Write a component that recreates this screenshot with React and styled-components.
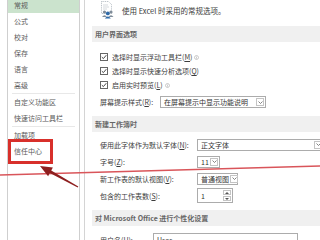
import React from "react";
import styled, { createGlobalStyle } from "styled-components";

const GlobalStyle = createGlobalStyle`
  html, body {
    margin: 0;
    padding: 0;
    background: #fff;
  }
  body {
    font-family: "Noto Sans CJK SC", "Noto Sans", sans-serif;
  }
`;

const Screen = styled.div`
  position: relative;
  width: 320px;
  height: 240px;
  overflow: hidden;
  display: flex;
  background: #fff;
  color: #3c3c3c;
  font-size: 7px;
`;

const Gutter = styled.div`
  width: 7px;
  flex: none;
`;

const Sidebar = styled.nav`
  width: 71px;
  flex: none;
  border-left: 1px solid #cfcfcf;
  border-right: 1px solid #cfcfcf;
`;

const NavList = styled.div`
  margin-top: -3px;
`;

const NavItem = styled.div`
  position: relative;
  height: 16px;
  line-height: 16px;
  padding-left: 6px;
  color: #5a5a5a;
  white-space: nowrap;
  background: ${(p) => (p.$active ? "#cbe3cd" : "transparent")};

  ${(p) =>
    p.$marked &&
    `
    &::after {
      content: "";
      position: absolute;
      left: 0;
      top: -4px;
      width: 45px;
      height: 25px;
      box-sizing: border-box;
      border: 3px solid #d8302b;
    }
  `}
`;

const NavDivider = styled.div`
  height: 1px;
  margin: 0 4px;
  background: #e8e8e8;
`;

const Main = styled.main`
  flex: 1;
  min-width: 0;
  margin-left: 4px;
  padding-left: 7px;
  border-left: 1px solid #d4d4d4;
`;

const Intro = styled.div`
  display: flex;
  align-items: center;
  gap: 7px;
  height: 20px;
  padding-left: 8px;
  font-size: 7.5px;
  white-space: nowrap;
`;

const SectionBar = styled.div`
  height: 16px;
  line-height: 16px;
  margin-top: ${(p) => p.$gap}px;
  padding-left: 3px;
  background: #f0f0f0;
  color: #666;
  font-weight: 700;
  white-space: nowrap;
`;

const SectionBody = styled.div`
  padding: ${(p) => p.$pad}px 0 0 8px;
`;

const CheckRow = styled.div`
  display: flex;
  align-items: center;
  height: 14px;
  white-space: nowrap;
`;

const CheckBox = styled.span`
  width: 8px;
  height: 8px;
  margin-right: 4px;
  box-sizing: border-box;
  border: 1px solid #666;
  display: flex;
  align-items: center;
  justify-content: center;
  flex: none;
`;

const Info = styled.svg`
  width: 5px;
  height: 5px;
  margin-left: 2px;
  flex: none;
`;

const FieldRow = styled.div`
  display: grid;
  grid-template-columns: ${(p) => p.$label}px auto;
  align-items: center;
  height: ${(p) => p.$height}px;
  margin-top: ${(p) => p.$gap || 0}px;
  white-space: nowrap;
`;

const Select = styled.div`
  display: flex;
  width: ${(p) => p.$width}px;
  height: ${(p) => p.$height || 12}px;
  box-sizing: border-box;
  border: 1px solid #acacac;
  background: #fff;
`;

const SelectText = styled.span`
  flex: 1;
  padding-left: 3px;
  display: flex;
  align-items: center;
  color: #333;
`;

const SelectArrow = styled.span`
  width: 8px;
  margin: 1px;
  box-sizing: border-box;
  border: 1px solid #c4c4c4;
  display: flex;
  align-items: center;
  justify-content: center;
  flex: none;
`;

const Spin = styled.span`
  width: 8px;
  margin: 1px;
  display: flex;
  flex-direction: column;
  gap: 1px;
  flex: none;
`;

const SpinHalf = styled.span`
  flex: 1;
  box-sizing: border-box;
  border: 1px solid #c4c4c4;
  display: flex;
  align-items: center;
  justify-content: center;
`;

const Overlay = styled.svg`
  position: absolute;
  left: 0;
  top: 0;
  width: 320px;
  height: 240px;
  pointer-events: none;
`;

const Key = ({ k }) => (
  <>
    (<u>{k}</u>)
  </>
);

const Chevron = () => (
  <svg width="5" height="3" viewBox="0 0 5 3">
    <path d="M0.5 0.5 L2.5 2.5 L4.5 0.5" fill="none" stroke="#666" strokeWidth="0.8" />
  </svg>
);

const Tick = () => (
  <svg width="6" height="6" viewBox="0 0 6 6">
    <path d="M0.8 3.1 L2.4 4.6 L5.3 1.2" fill="none" stroke="#333" strokeWidth="0.9" />
  </svg>
);

const InfoIcon = () => (
  <Info viewBox="0 0 5 5">
    <circle cx="2.5" cy="2.5" r="2" fill="none" stroke="#9a9a9a" strokeWidth="0.5" />
    <path d="M2.5 2.2 V3.6 M2.5 1.3 V1.7" stroke="#9a9a9a" strokeWidth="0.6" />
  </Info>
);

const GeneralIcon = () => (
  <svg width="15" height="18" viewBox="0 0 15 18">
    <path
      d="M1.5 0.5 H8.5 L11.5 3.5 V12.5 H1.5 Z"
      fill="#fff"
      stroke="#9aa3ad"
      strokeWidth="0.7"
      strokeDasharray="1 0.8"
    />
    <path d="M3 4 H8 M3 6 H9 M3 8 H7" stroke="#b8c0c8" strokeWidth="0.6" />
    <circle cx="4.5" cy="11" r="1.6" fill="#7f8c99" />
    <path d="M2 16 Q4.5 12.6 7 16 Z" fill="#7f8c99" />
    <circle cx="11" cy="11" r="1.6" fill="#7f8c99" />
    <path d="M8.5 16 Q11 12.6 13.5 16 Z" fill="#7f8c99" />
    <circle cx="7.8" cy="12.4" r="1.9" fill="#2f6aa8" />
    <path d="M4.8 17.6 Q7.8 13.6 10.8 17.6 Z" fill="#2f6aa8" />
  </svg>
);

const navGroups = [
  ["常规", "公式", "校对", "保存", "语言", "高级"],
  ["自定义功能区", "快速访问工具栏"],
  ["加载项", "信任中心"],
];

export default function App() {
  return (
    <>
      <GlobalStyle />
      <Screen>
        <Gutter />
        <Sidebar>
          <NavList>
            {navGroups.map((group, gi) => (
              <React.Fragment key={gi}>
                {gi > 0 && <NavDivider />}
                {group.map((name) => (
                  <NavItem
                    key={name}
                    $active={name === "常规"}
                    $marked={name === "信任中心"}
                  >
                    {name}
                  </NavItem>
                ))}
              </React.Fragment>
            ))}
          </NavList>
        </Sidebar>

        <Main>
          <Intro>
            <GeneralIcon />
            使用 Excel 时采用的常规选项。
          </Intro>

          <SectionBar $gap={6}>用户界面选项</SectionBar>
          <SectionBody $pad={8}>
            <CheckRow>
              <CheckBox>
                <Tick />
              </CheckBox>
              选择时显示浮动工具栏<Key k="M" />
              <InfoIcon />
            </CheckRow>
            <CheckRow>
              <CheckBox>
                <Tick />
              </CheckBox>
              选择时显示快速分析选项<Key k="Q" />
            </CheckRow>
            <CheckRow>
              <CheckBox>
                <Tick />
              </CheckBox>
              启用实时预览<Key k="L" />
              <InfoIcon />
            </CheckRow>
            <FieldRow $label={60} $height={16} $gap={2}>
              <span>
                屏幕提示样式<Key k="R" />:
              </span>
              <Select $width={106}>
                <SelectText>在屏幕提示中显示功能说明</SelectText>
                <SelectArrow>
                  <Chevron />
                </SelectArrow>
              </Select>
            </FieldRow>
          </SectionBody>

          <SectionBar $gap={6}>新建工作簿时</SectionBar>
          <SectionBody $pad={4}>
            <FieldRow $label={97} $height={17}>
              <span>
                使用此字体作为默认字体<Key k="N" />:
              </span>
              <Select $width={127}>
                <SelectText>正文字体</SelectText>
                <SelectArrow>
                  <Chevron />
                </SelectArrow>
              </Select>
            </FieldRow>
            <FieldRow $label={97} $height={17}>
              <span>
                字号<Key k="Z" />:
              </span>
              <Select $width={23}>
                <SelectText>11</SelectText>
                <SelectArrow>
                  <Chevron />
                </SelectArrow>
              </Select>
            </FieldRow>
            <FieldRow $label={97} $height={17}>
              <span>
                新工作表的默认视图<Key k="V" />:
              </span>
              <Select $width={41}>
                <SelectText>普通视图</SelectText>
                <SelectArrow>
                  <Chevron />
                </SelectArrow>
              </Select>
            </FieldRow>
            <FieldRow $label={97} $height={17}>
              <span>
                包含的工作表数<Key k="S" />:
              </span>
              <Select $width={36} $height={15}>
                <SelectText>1</SelectText>
                <Spin>
                  <SpinHalf>
                    <svg width="4" height="2" viewBox="0 0 4 2">
                      <path d="M0 2 L2 0 L4 2 Z" fill="#555" />
                    </svg>
                  </SpinHalf>
                  <SpinHalf>
                    <svg width="4" height="2" viewBox="0 0 4 2">
                      <path d="M0 0 L2 2 L4 0 Z" fill="#555" />
                    </svg>
                  </SpinHalf>
                </Spin>
              </Select>
            </FieldRow>
          </SectionBody>

          <SectionBar $gap={6}>对 Microsoft Office 进行个性化设置</SectionBar>
          <SectionBody $pad={7}>
            <FieldRow $label={53} $height={14}>
              <span>
                用户名<Key k="U" />:
              </span>
              <Select $width={145} $height={14}>
                <SelectText>User</SelectText>
              </Select>
            </FieldRow>
          </SectionBody>
        </Main>

        <Overlay viewBox="0 0 320 240">
          <line x1="0" y1="175" x2="320" y2="166" stroke="#d9555a" strokeWidth="1.3" />
          <polygon
            points="40,166 52.9,167.4 51.2,170.5 78.3,186.5 77.7,187.5 49.8,173.1 48.1,176.2"
            fill="#8e1f1f"
          />
        </Overlay>
      </Screen>
    </>
  );
}
